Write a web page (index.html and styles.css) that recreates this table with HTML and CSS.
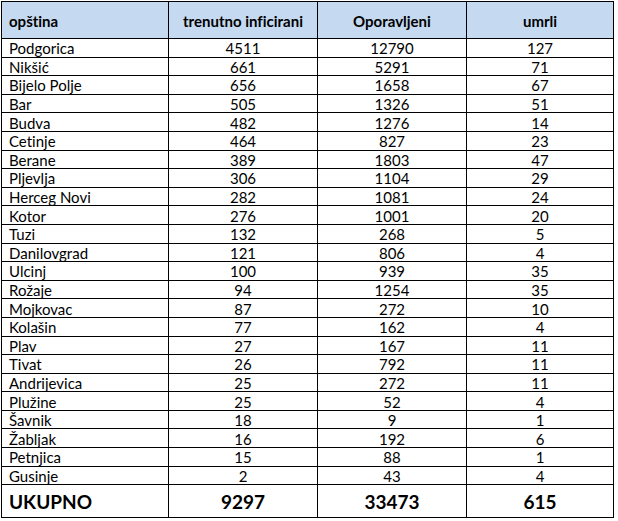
FILE: index.html
```html
<!DOCTYPE html>
<html lang="sr">
<head>
<meta charset="utf-8">
<title>COVID-19 po opštinama</title>
<link rel="stylesheet" href="styles.css">
</head>
<body>
<table class="stats">
  <colgroup>
    <col class="c-name">
    <col class="c-num">
    <col class="c-num">
    <col class="c-last">
  </colgroup>
  <thead>
    <tr class="head">
      <th class="name">opština</th>
      <th>trenutno inficirani</th>
      <th>Oporavljeni</th>
      <th>umrli</th>
    </tr>
  </thead>
  <tbody>
    <tr><td class="name">Podgorica</td><td>4511</td><td>12790</td><td>127</td></tr>
    <tr><td class="name">Nikšić</td><td>661</td><td>5291</td><td>71</td></tr>
    <tr><td class="name">Bijelo Polje</td><td>656</td><td>1658</td><td>67</td></tr>
    <tr><td class="name">Bar</td><td>505</td><td>1326</td><td>51</td></tr>
    <tr><td class="name">Budva</td><td>482</td><td>1276</td><td>14</td></tr>
    <tr><td class="name">Cetinje</td><td>464</td><td>827</td><td>23</td></tr>
    <tr><td class="name">Berane</td><td>389</td><td>1803</td><td>47</td></tr>
    <tr><td class="name">Pljevlja</td><td>306</td><td>1104</td><td>29</td></tr>
    <tr><td class="name">Herceg Novi</td><td>282</td><td>1081</td><td>24</td></tr>
    <tr><td class="name">Kotor</td><td>276</td><td>1001</td><td>20</td></tr>
    <tr><td class="name">Tuzi</td><td>132</td><td>268</td><td>5</td></tr>
    <tr><td class="name">Danilovgrad</td><td>121</td><td>806</td><td>4</td></tr>
    <tr><td class="name">Ulcinj</td><td>100</td><td>939</td><td>35</td></tr>
    <tr><td class="name">Rožaje</td><td>94</td><td>1254</td><td>35</td></tr>
    <tr><td class="name">Mojkovac</td><td>87</td><td>272</td><td>10</td></tr>
    <tr><td class="name">Kolašin</td><td>77</td><td>162</td><td>4</td></tr>
    <tr><td class="name">Plav</td><td>27</td><td>167</td><td>11</td></tr>
    <tr><td class="name">Tivat</td><td>26</td><td>792</td><td>11</td></tr>
    <tr><td class="name">Andrijevica</td><td>25</td><td>272</td><td>11</td></tr>
    <tr><td class="name">Plužine</td><td>25</td><td>52</td><td>4</td></tr>
    <tr><td class="name">Šavnik</td><td>18</td><td>9</td><td>1</td></tr>
    <tr><td class="name">Žabljak</td><td>16</td><td>192</td><td>6</td></tr>
    <tr><td class="name">Petnjica</td><td>15</td><td>88</td><td>1</td></tr>
    <tr><td class="name">Gusinje</td><td>2</td><td>43</td><td>4</td></tr>
  </tbody>
  <tfoot>
    <tr class="total">
      <td class="name">UKUPNO</td><td>9297</td><td>33473</td><td>615</td>
    </tr>
  </tfoot>
</table>
</body>
</html>
```
FILE: styles.css
```css
html, body {
  margin: 0;
  padding: 0;
  background: #ffffff;
}

body {
  padding: 1px 0 0 1px;
  font-family: Lato, "Open Sans", "Liberation Sans", sans-serif;
  font-variant-ligatures: none;
  color: #000000;
}

.stats {
  border-collapse: collapse;
  table-layout: fixed;
  width: 612px;
}

.c-name { width: 167px; }
.c-num { width: 149px; }
.c-last { width: 147px; }

.stats th,
.stats td {
  border: 1px solid #000000;
  padding: 0 4px;
  text-align: center;
  font-size: 15px;
  line-height: 16px;
  white-space: nowrap;
  overflow: hidden;
}

.stats .name {
  text-align: left;
  padding-left: 7px;
}

.head th {
  background: #c5d9f1;
  height: 35px;
  font-weight: bold;
  padding-top: 1px;
}

.stats tbody tr {
  height: 18.6px;
}

.stats tbody td {
  padding-top: 1px;
  padding-bottom: 0;
}

.total td {
  height: 30px;
  font-size: 19px;
  font-weight: bold;
  padding-top: 2px;
}
```
